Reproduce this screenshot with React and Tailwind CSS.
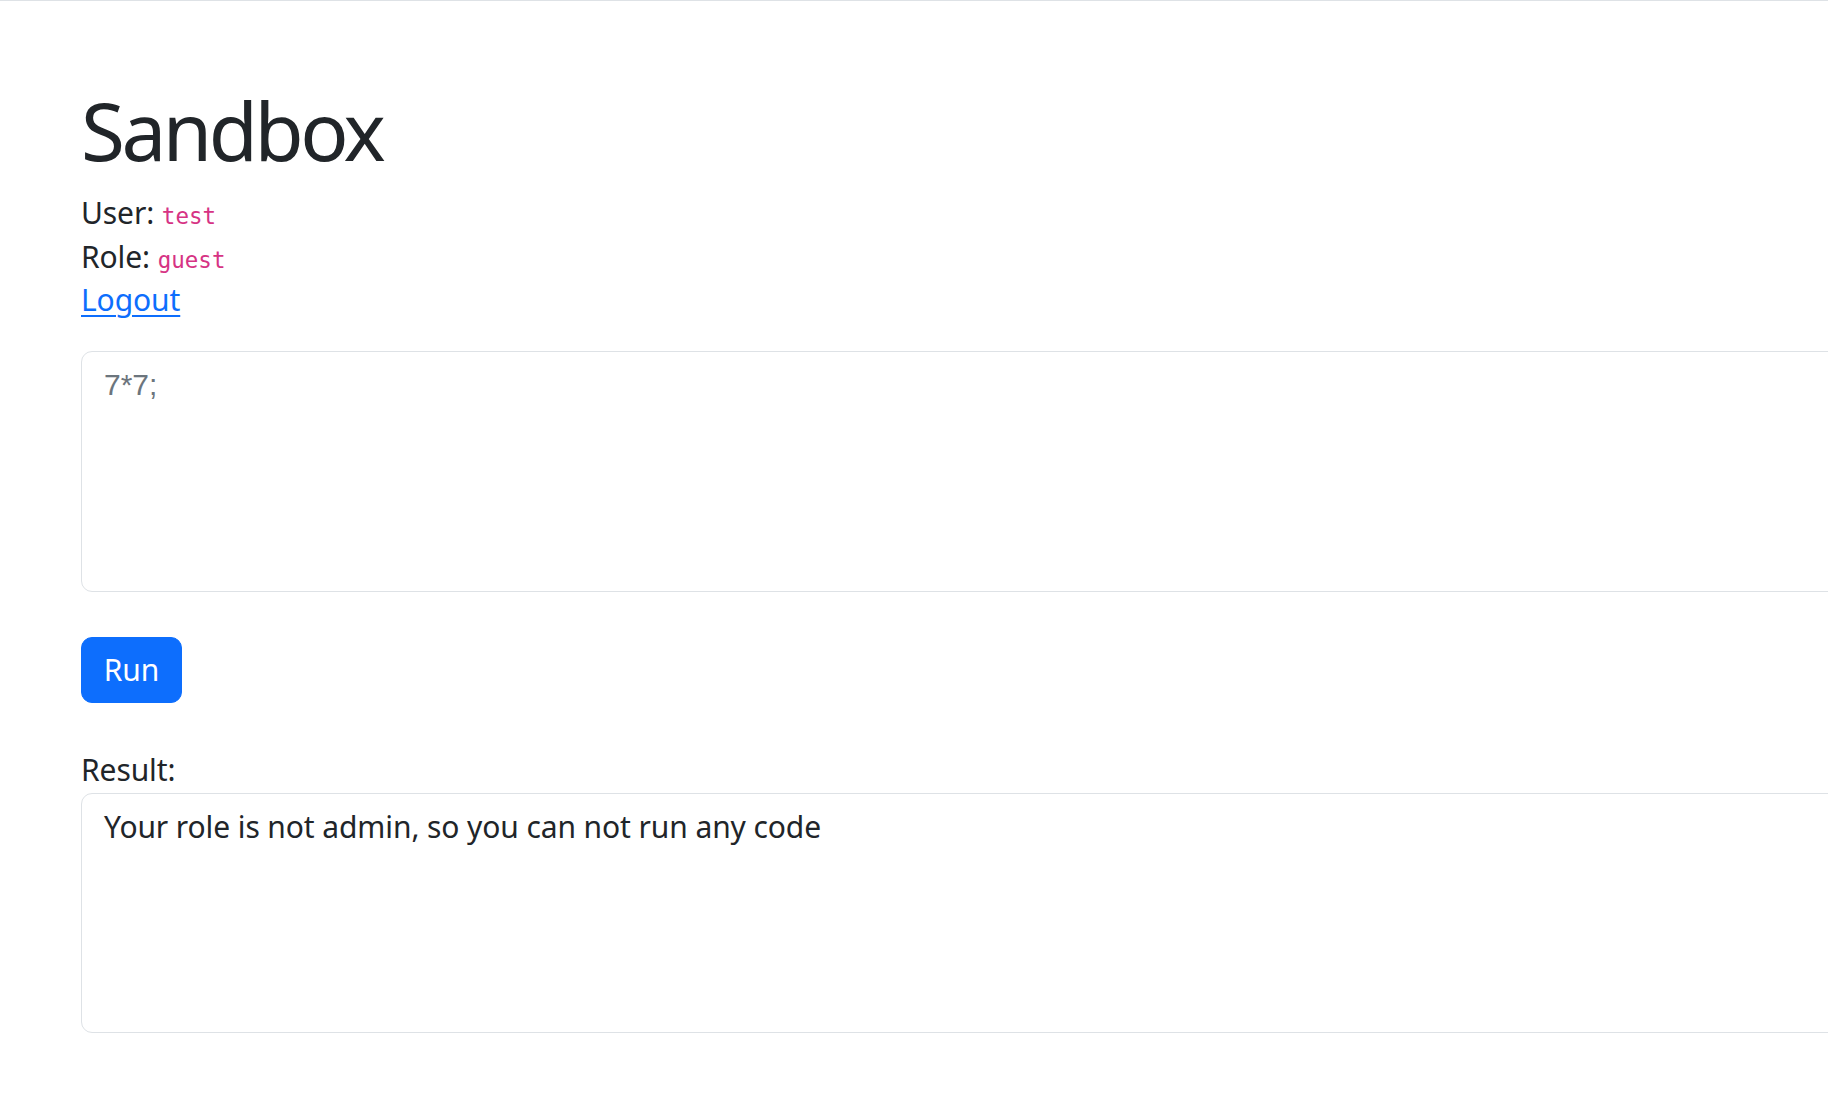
export default function App() {
  const sans = { fontFamily: '"Noto Sans", "Open Sans", sans-serif' };
  return (
    <div
      className="min-h-[1097px] w-full overflow-hidden border-t border-[#dee2e6] bg-white text-[#212529]"
      style={sans}
    >
      <div className="pl-[81px] pt-[81px] font-['Noto_Sans',sans-serif]">
        <h1 className="mb-[13px] text-[80px] leading-[96px] font-normal tracking-[-3.5px] text-[#212529]">
          Sandbox
        </h1>
        <div className="text-[30px] leading-[43.5px] tracking-[-0.1px]">
          <div className="h-[43.5px]">
            User:{' '}
            <code className="font-['DejaVu_Sans_Mono',monospace] text-[22.5px] leading-none tracking-normal text-[#d63384]">
              test
            </code>
          </div>
          <div className="h-[43.5px]">
            Role:{' '}
            <code className="font-['DejaVu_Sans_Mono',monospace] text-[22.5px] leading-none tracking-normal text-[#d63384]">
              guest
            </code>
          </div>
          <div className="h-[43.5px]">
            <a href="#" className="text-[#0d6efd] underline underline-offset-[4px] decoration-[2px]">
              Logout
            </a>
          </div>
        </div>
        <textarea
          className="mt-[29.5px] block h-[241px] w-[1800px] resize-none rounded-[11px] border border-[#dee2e6] bg-white px-[22px] pt-[11px] font-['Liberation_Sans',Arial,sans-serif] text-[30px] leading-[43.5px] text-[#212529] outline-none placeholder:text-[#6c757d]"
          placeholder="7*7;"
        />
        <button className="mt-[45px] flex h-[66px] w-[101px] items-center justify-center rounded-[11px] border border-[#0d6efd] bg-[#0d6efd] text-[30px] leading-[43.5px] tracking-[-0.1px] text-white">
          Run
        </button>
        <div className="mt-[45px] h-[43.5px] text-[30px] leading-[43.5px] tracking-[-0.1px]">Result:</div>
        <div className="mt-[1px] h-[240px] w-[1800px] rounded-[11px] border border-[#dee2e6] bg-white px-[22px] pt-[11px] text-[30px] leading-[43.5px] tracking-[-0.1px] text-[#212529]">
          Your role is not admin, so you can not run any code
        </div>
      </div>
    </div>
  );
}
